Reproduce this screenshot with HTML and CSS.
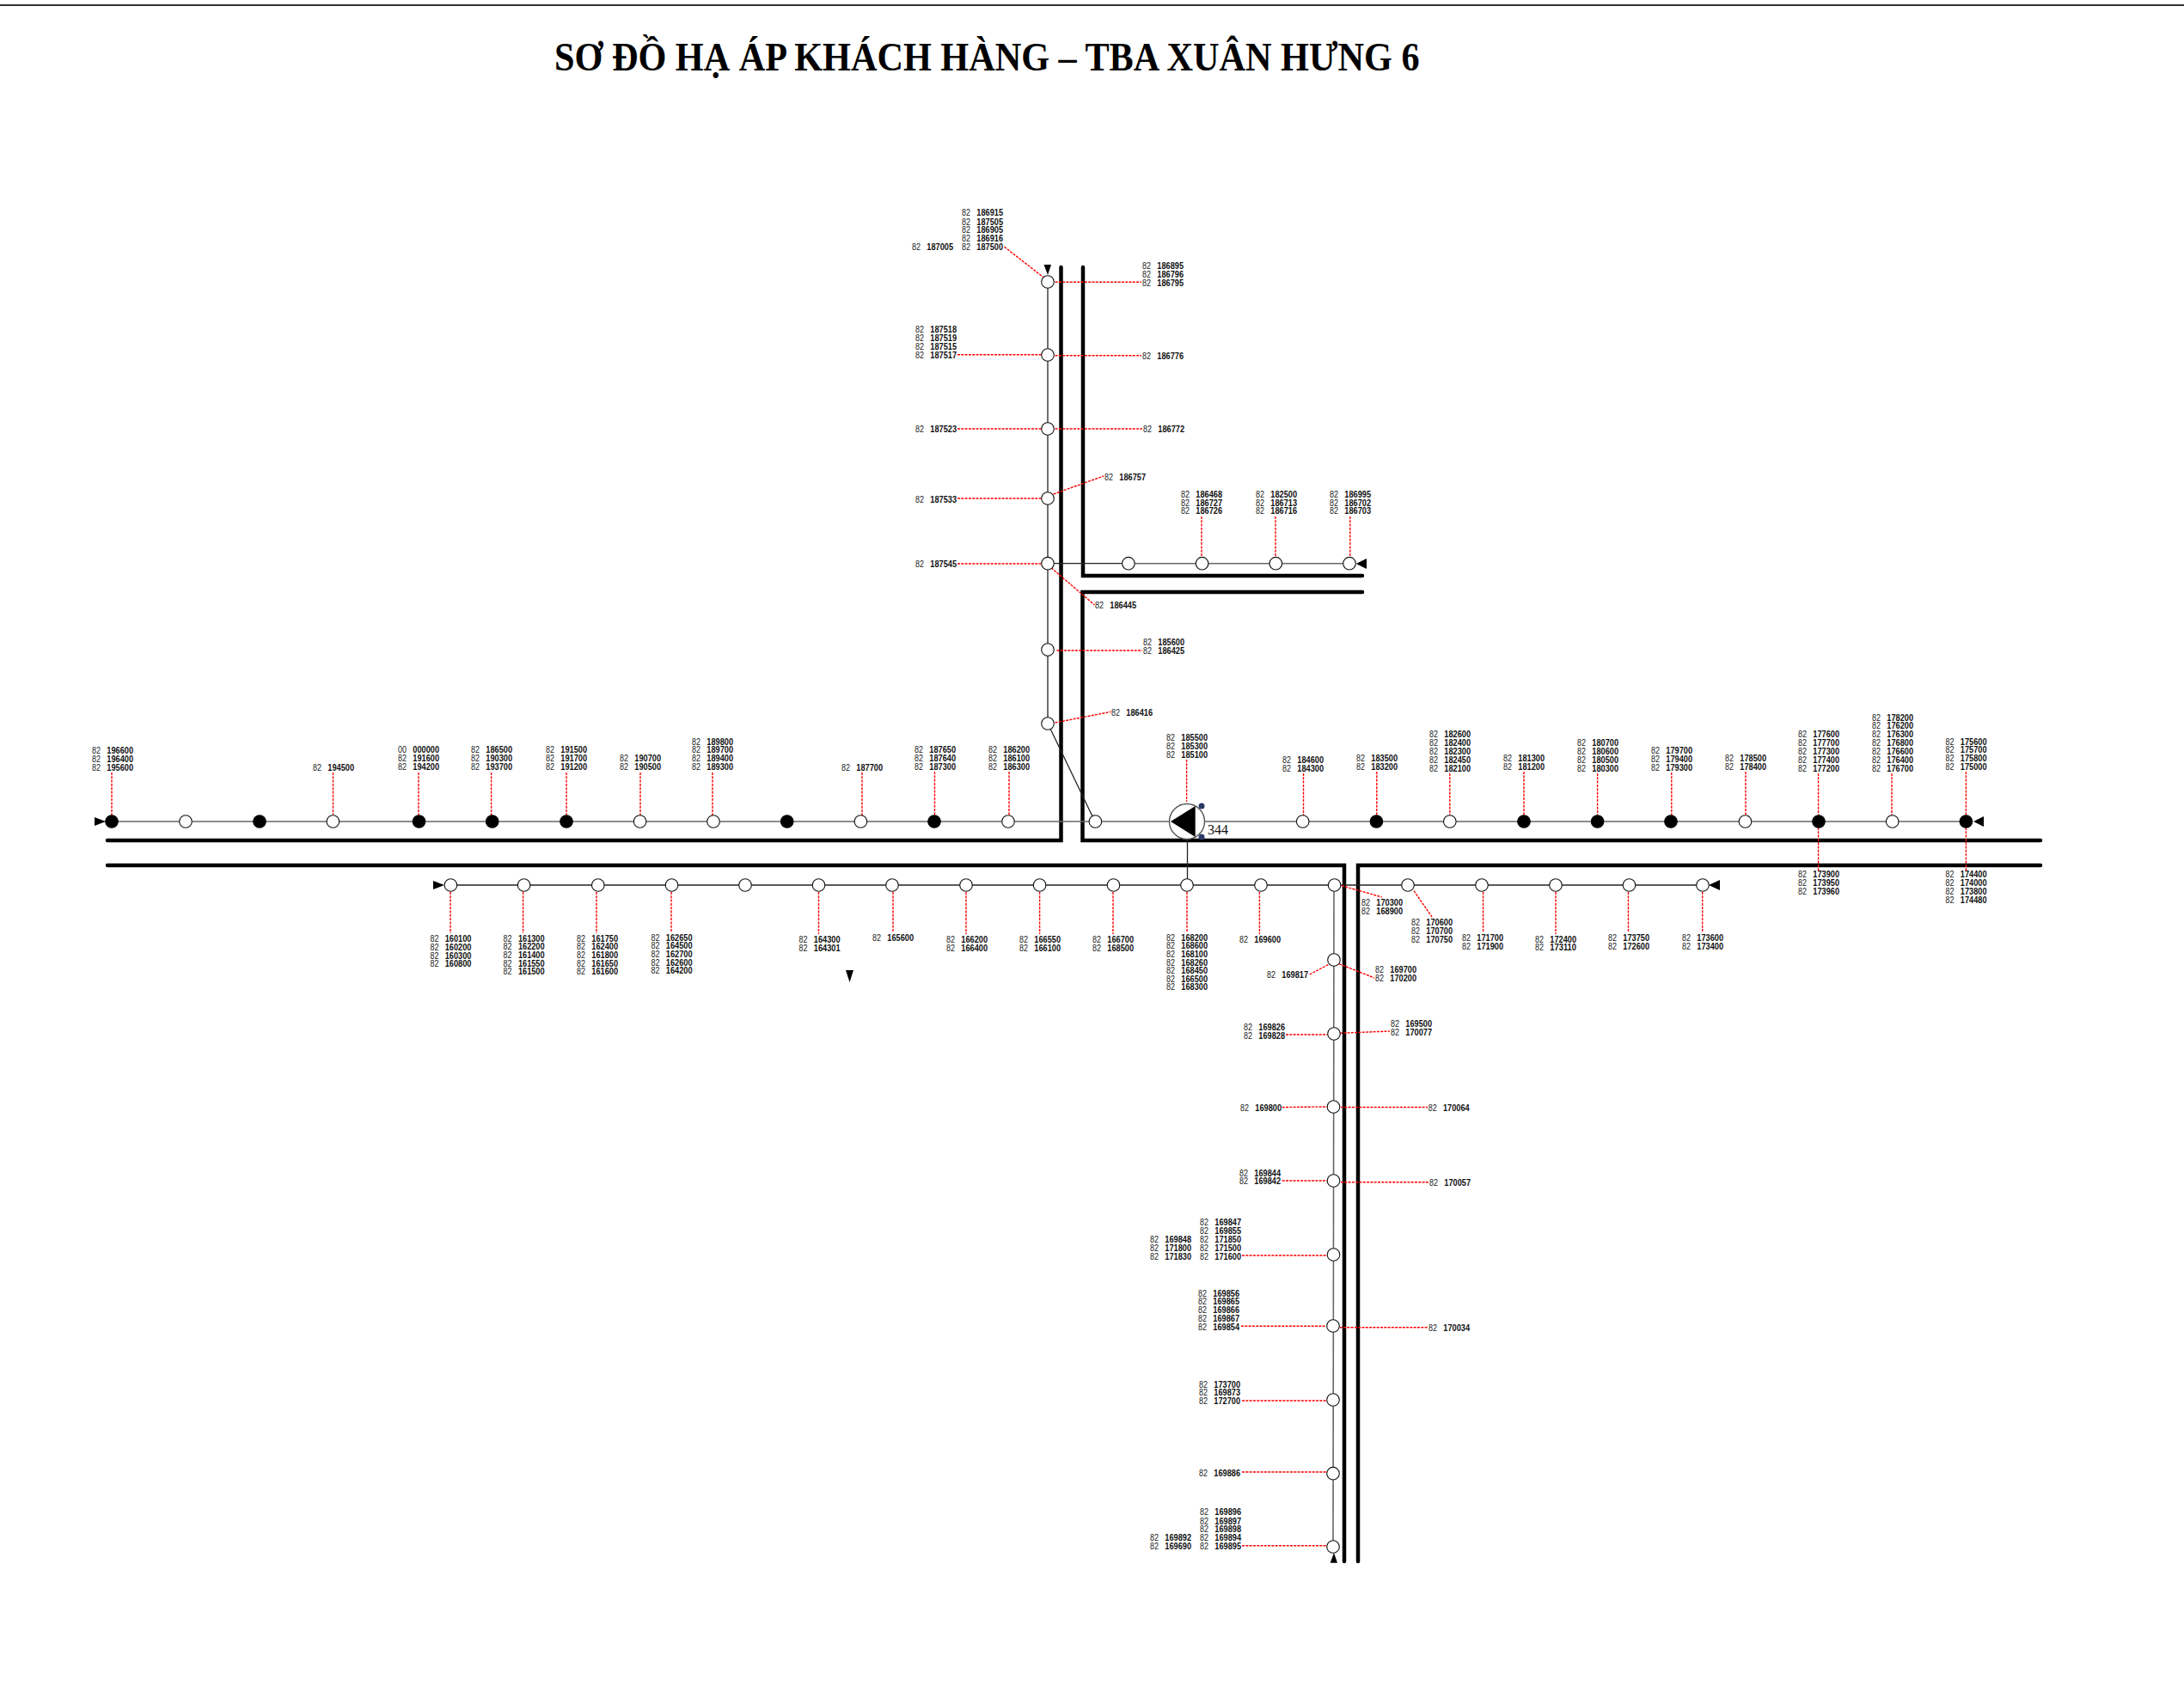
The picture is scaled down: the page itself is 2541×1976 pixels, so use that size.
FILE: index.html
```html
<!DOCTYPE html>
<html lang="vi">
<head>
    <meta charset="UTF-8">
    <title>Sơ đồ hạ áp khách hàng</title>
    <link rel="stylesheet" href="styles.css">
</head>
<body>
    <div class="top-rule"></div>
    <h1 class="title">SƠ ĐỒ HẠ ÁP KHÁCH HÀNG – TBA XUÂN HƯNG 6</h1>
    <svg id="diagram" class="diagram" viewBox="0 100 2541 1876" xmlns="http://www.w3.org/2000/svg"></svg>
    <script src="script.js"></script>
</body>
</html>
```

FILE: styles.css
```css
body {
    margin: 0;
    background-color: #ffffff;
}
.top-rule {
    height: 2px;
    margin-top: 5px;
    background-color: #333333;
}
.title {
    margin: 0 0 0 645px;
    padding: 36.5px 0 10.5px;
    font-family: "Liberation Serif", serif;
    font-size: 46px;
    font-weight: bold;
    line-height: 46px;
    color: #000000;
    white-space: nowrap;
    transform: scaleX(0.918);
    transform-origin: left;
}
.diagram {
    display: block;
    width: 2541px;
    height: 1876px;
}

/* cable trench, thick double lines */
.bus {
    fill: none;
    stroke: #000000;
    stroke-width: 4.5;
    stroke-linecap: round;
    stroke-linejoin: miter;
}
/* feeder lines */
.feeder {
    stroke: #222222;
    stroke-width: 1.3;
}
.feeder-grey {
    stroke: #666666;
    stroke-width: 1.6;
}
/* red drops from pole to customer code */
.drop {
    stroke: #ff0000;
    stroke-width: 1.4;
    stroke-dasharray: 3 1.3;
}
.pole {
    fill: #ffffff;
    stroke: #111111;
    stroke-width: 1.1;
}
.pole-on {
    fill: #000000;
    stroke: #000000;
    stroke-width: 1.1;
}
.arrow {
    fill: #000000;
}
.pump {
    fill: #ffffff;
    stroke: #555555;
    stroke-width: 1.4;
}
.pump-dot {
    fill: #2b3a67;
}
.pump-no {
    font-family: "Liberation Serif", serif;
    font-size: 16px;
    fill: #111111;
}
.code-pre {
    font-family: "Liberation Sans", sans-serif;
    font-size: 11.5px;
    fill: #222222;
}
.code-no {
    font-family: "Liberation Sans", sans-serif;
    font-size: 11.5px;
    font-weight: bold;
    fill: #111111;
}
```

FILE: script.js
```js
const svg = document.getElementById("diagram");
const NS = "http://www.w3.org/2000/svg";

function add(tag, cls, attrs, text) {
    const el = document.createElementNS(NS, tag);
    el.setAttribute("class", cls);
    for (const k in attrs) el.setAttribute(k, attrs[k]);
    if (text) el.textContent = text;
    svg.appendChild(el);
    return el;
}

function line(cls, x1, y1, x2, y2) {
    add("line", cls, { x1, y1, x2, y2 });
}

// thick trench lines
[
    "M125 978H1234.5V311",
    "M1260 311V670H1585",
    "M1585 689H1259.5V978H2374",
    "M125 1007H1564V1817",
    "M1580 1817V1007H2374"
].forEach(d => add("path", "bus", { d }));

// feeders
line("feeder-grey", 130, 956, 2287, 956);
line("feeder", 524, 1030, 1981, 1030);
line("feeder", 1219, 328, 1219, 842);
line("feeder", 1219, 655.7, 1313, 655.7);
line("feeder-grey", 1313, 655.7, 1570, 655.7);
line("feeder-grey", 1552, 1030, 1551, 1800);
line("feeder", 1222, 848, 1271, 950);
line("feeder", 1381.5, 976, 1381.5, 1030);

// red drops: x1 y1 x2 y2
[
    [1168.6,287.3,1214,322.7],[1227.5,328.3,1328,328.3],[1114,412.7,1213,412.7],[1227.5,413.7,1328,413.7],
    [1114,499,1213,499],[1227.5,499,1329,499],[1225.6,575,1284,554],[1114,580,1213,580],
    [1398,601,1398,648],[1484,601,1484,648],[1570.8,601,1570.8,648],[1114,656,1213,656],
    [1223,660.7,1273.4,704],[1229.4,757,1329,757],[1227.5,841,1292.6,828.3],
    [1380.6,884,1380.6,933],[1516.5,900,1516.5,949],[1601.8,898,1601.8,949],[1087.5,898,1087.5,949],[1174,898,1174,949],
    [130,899,130,949],[387.5,899,387.5,948],[487,899,487,949],[571.6,899,571.6,949],[659,899,659,949],[745,899,745,949],[829,899,829,949],
    [1003,899,1003,949],[1686.8,900,1686.8,949],[1773,898,1773,949],[1858.6,900,1858.6,949],[1944.8,899,1944.8,949],[2031,898,2031,949],
    [2115.6,900,2115.6,949],[2201,900,2201,949],[2287.4,898,2287.4,949],[2115.6,963,2115.6,1013],[2287.4,963,2287.4,1013],
    [524,1038,524,1086],[608.6,1038,608.6,1086],[694,1038,694,1086],[781,1038,781,1085],[952.5,1038,952.5,1087],[1039,1038,1039,1085],[1124,1038,1124,1087],[1209.6,1038,1209.6,1087],
    [1295,1038,1295,1087],[1381,1038,1381,1085],[1465.4,1038,1465.4,1087],[1561,1030.7,1607.8,1044],[1645,1036.7,1666,1067],
    [1725.6,1038,1725.6,1085],[1810,1038,1810,1087],[1894.5,1038,1894.5,1085],[1980.7,1038,1980.7,1085],
    [1523.6,1134,1547,1121.7],[1558,1121.7,1599,1138],[1496,1204,1544.5,1204],[1559,1202.3,1617,1200],
    [1491.7,1288.5,1544,1288],[1560,1288.5,1661,1288.5],
    [1491.7,1374,1544,1374],[1560,1375.7,1662.7,1375.7],[1445,1461,1544,1461],[1444,1543.3,1543,1543.3],[1558.7,1544.7,1661.7,1544.7],
    [1445,1630,1544,1630],[1445,1713,1544,1713],[1445,1798.7,1544,1798.7]
].forEach(d => line("drop", d[0], d[1], d[2], d[3]));

// poles, open ones first then the filled ones
const poles = [
    [216,956],[387.4,956],[744.6,956],[830,956],[1001.4,956],[1173,956],[1274.4,956],[1515.7,956],[1686.8,956],[2030.5,956],[2201.7,956],
    [524.4,1030],[609.6,1030],[695.8,1030],[781.5,1030],[867,1030],[952.5,1030],[1038,1030],[1124,1030],[1209.6,1030],
    [1295.5,1030],[1381,1030],[1467,1030],[1552.6,1030],[1638,1030],[1724,1030],[1810,1030],[1895.5,1030],[1981,1030],
    [1219,328],[1219,413],[1219,499],[1219,580],[1219,655.7],[1219,756],[1219,842],
    [1312.9,655.7],[1398.6,655.7],[1484.3,655.7],[1570,655.7],
    [1552,1117],[1552,1203],[1551.5,1288],[1551.5,1374],[1551.5,1460],[1551,1543],[1551,1629],[1551,1714.7],[1551,1800]
];
const polesOn = [
    [130,956],[302,956],[487.5,956],[572.7,956],[659,956],[915.7,956],[1087,956],[1601.4,956],
    [1773,956],[1858.6,956],[1944,956],[2116,956],[2287.4,956]
];
poles.forEach(p => add("circle", "pole", { cx: p[0], cy: p[1], r: 7.3 }));
polesOn.forEach(p => add("circle", "pole-on", { cx: p[0], cy: p[1], r: 7.3 }));

// line end arrows
[
    "110,951 110,961 123,956", "2308,950 2308,962 2296,956",
    "504,1025 504,1035 517,1030", "2001,1024 2001,1036 1988,1030",
    "1214.5,308 1223,308 1219,320", "1590,650 1590,662 1577.7,656",
    "984,1129 993,1129 988.5,1143", "1547.7,1818.7 1556,1818.7 1552,1807"
].forEach(points => add("polygon", "arrow", { points }));

// pump / transformer
add("circle", "pump", { cx: 1381, cy: 956, r: 20.5 });
add("polygon", "arrow", { points: "1362,956 1390.7,938 1390.7,974" });
add("circle", "pump-dot", { cx: 1398, cy: 938, r: 3.5 });
add("circle", "pump-dot", { cx: 1398, cy: 974, r: 3.5 });
add("text", "pump-no", { x: 1405, y: 971 }, "344");

// customer codes: left x, line centres, codes
const labels = [
    [1119,[247,258,267,277,287],"186915 187505 186905 186916 187500"],
    [1061,[287],"187005"],
    [1329,[309,319,329],"186895 186796 186795"],
    [1065,[383,393,403,413],"187518 187519 187515 187517"],
    [1329,[414],"186776"],
    [1065,[499],"187523"],
    [1330,[499],"186772"],
    [1285,[555],"186757"],
    [1065,[581],"187533"],
    [1374,[575,585,594],"186468 186727 186726"],
    [1461,[575,585,594],"182500 186713 186716"],
    [1547,[575,585,594],"186995 186702 186703"],
    [1065,[656],"187545"],
    [1274,[704],"186445"],
    [1330,[747,757],"185600 186425"],
    [1293,[829],"186416"],
    [1357,[858,868,878],"185500 185300 185100"],
    [1492,[884,894],"184600 184300"],
    [1578,[882,892],"183500 183200"],
    [1064,[872,882,892],"187650 187640 187300"],
    [1150,[872,882,892],"186200 186100 186300"],
    [107,[873,883,893],"196600 196400 195600"],
    [364,[893],"194500"],
    [463,[872,882,892],"000000 191600 194200"],
    [548,[872,882,892],"186500 190300 193700"],
    [635,[872,882,892],"191500 191700 191200"],
    [721,[882,892],"190700 190500"],
    [805,[863,872,882,892],"189800 189700 189400 189300"],
    [979,[893],"187700"],
    [1663,[854,864,874,884,894],"182600 182400 182300 182450 182100"],
    [1749,[882,892],"181300 181200"],
    [1835,[864,874,884,894],"180700 180600 180500 180300"],
    [1921,[873,883,893],"179700 179400 179300"],
    [2007,[882,892],"178500 178400"],
    [2092,[854,864,874,884,894],"177600 177700 177300 177400 177200"],
    [2178,[835,844,854,864,874,884,894],"178200 176200 176300 176800 176600 176400 176700"],
    [2263.5,[863,872,882,892],"175600 175700 175800 175000"],
    [2092,[1017,1027,1037],"173900 173950 173960"],
    [2263.5,[1017,1027,1037,1047],"174400 174000 173800 174480"],
    [500.4,[1092,1102,1112,1121],"160100 160200 160300 160800"],
    [585.6,[1092,1101,1111,1121,1130],"161300 162200 161400 161550 161500"],
    [671,[1092,1101,1111,1121,1130],"161750 162400 161800 161650 161600"],
    [757.5,[1091,1100,1110,1119.5,1129],"162650 164500 162700 162600 164200"],
    [929.5,[1093,1103],"164300 164301"],
    [1015,[1091],"165600"],
    [1101,[1093,1103],"166200 166400"],
    [1186,[1093,1103],"166550 166100"],
    [1271,[1093,1103],"166700 168500"],
    [1357,[1091,1100,1110,1120,1129,1139,1148],"168200 168600 168100 168260 168450 166500 168300"],
    [1442,[1093],"169600"],
    [1584,[1050,1060],"170300 168900"],
    [1642,[1073,1083,1093],"170600 170700 170750"],
    [1701,[1091,1101],"171700 171900"],
    [1786,[1093,1102],"172400 173110"],
    [1871,[1091,1101],"173750 172600"],
    [1957,[1091,1101],"173600 173400"],
    [1474,[1134],"169817"],
    [1600,[1128,1138],"169700 170200"],
    [1447,[1195,1205],"169826 169828"],
    [1618,[1191,1201],"169500 170077"],
    [1443,[1289],"169800"],
    [1661.7,[1289],"170064"],
    [1442,[1365,1374],"169844 169842"],
    [1663,[1376],"170057"],
    [1396,[1422,1432,1442,1452,1462],"169847 169855 171850 171500 171600"],
    [1338,[1442,1452,1462],"169848 171800 171830"],
    [1394,[1505,1514,1524,1534,1544],"169856 169865 169866 169867 169854"],
    [1662,[1545],"170034"],
    [1395,[1611,1620,1630],"173700 169873 172700"],
    [1395,[1714],"169886"],
    [1396,[1759,1770,1779,1789,1799],"169896 169897 169898 169894 169895"],
    [1338,[1789,1799],"169892 169690"]
];

labels.forEach(l => {
    l[2].split(" ").forEach((code, i) => {
        const y = l[1][i] + 4.2;
        add("text", "code-pre", { x: l[0], y, textLength: 10, lengthAdjust: "spacingAndGlyphs" }, code === "000000" ? "00" : "82");
        add("text", "code-no", { x: l[0] + 17.3, y, textLength: 30.7, lengthAdjust: "spacingAndGlyphs" }, code);
    });
});
```
